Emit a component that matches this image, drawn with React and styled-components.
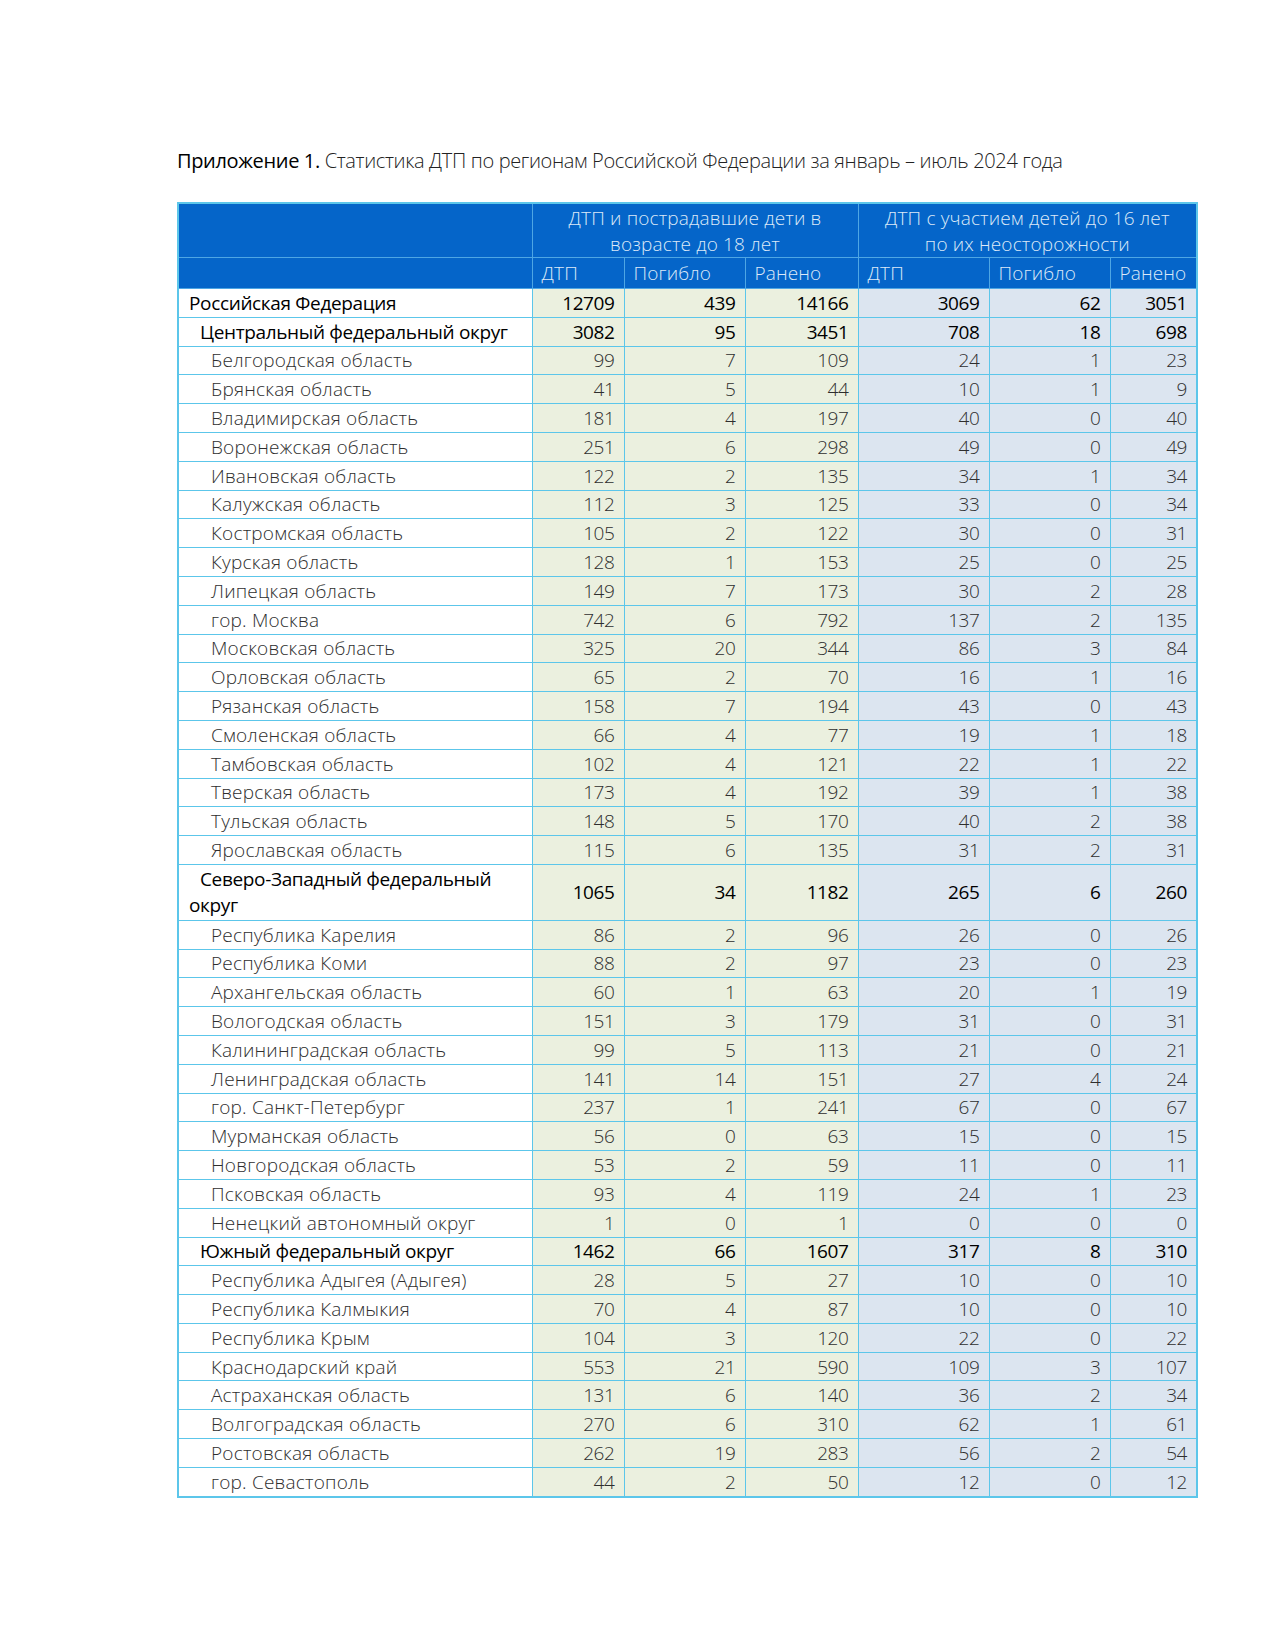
import React from "react";
import styled, { createGlobalStyle } from "styled-components";

const GlobalStyle = createGlobalStyle`
  body {
    margin: 0;
    background: #ffffff;
    font-family: "Open Sans", "Noto Sans", sans-serif;
  }
`;

const Page = styled.div`
  width: 1275px;
  min-height: 1650px;
  box-sizing: border-box;
  padding: 148px 0 0 177px;
`;

const Caption = styled.p`
  margin: 0 0 28px 0;
  font-size: 20px;
  line-height: 26px;
  font-weight: 300;
  letter-spacing: -0.35px;
  color: #222;

  b {
    font-weight: 400;
    color: #000;
  }
`;

const Table = styled.table`
  width: 1019px;
  border-collapse: collapse;
  table-layout: fixed;
  border: 2px solid #5cc6ea;
  font-size: 19px;
  letter-spacing: -0.4px;
`;

const HeadCell = styled.th`
  background: #0565c9;
  color: #dce9f8;
  font-weight: 300;
  letter-spacing: 0.15px;
  text-align: ${(p) => p.align || "left"};
  padding: 0 ${(p) => (p.align === "center" ? "4px" : "9px")};
  height: ${(p) => p.h}px;
  line-height: 26px;
  border: 1px solid #4ea6e4;
  border-top: ${(p) => (p.top ? "2px solid #5cc6ea" : "1px solid #4ea6e4")};
  vertical-align: middle;
`;

const NameCell = styled.td`
  background: #ffffff;
  color: ${(p) => (p.level < 2 ? "#000" : "#2e2e2e")};
  font-weight: ${(p) => (p.level < 2 ? 400 : 300)};
  letter-spacing: ${(p) => (p.level < 2 ? "-0.35px" : "0.2px")};
  padding: 0 8px 0 10px;
  text-indent: ${(p) => p.level * 11}px;
  height: ${(p) => p.h}px;
  line-height: 26px;
  border: 1px solid #5cc6ea;
  white-space: nowrap;
`;

const NumCell = styled.td`
  background: ${(p) => (p.group === 1 ? "#ebf0df" : "#dce5f0")};
  color: ${(p) => (p.bold ? "#000" : "#2e2e2e")};
  font-weight: ${(p) => (p.bold ? 400 : 300)};
  text-align: right;
  padding: 0 9px 0 4px;
  height: ${(p) => p.h}px;
  border: 1px solid #5cc6ea;
`;

const rows = [
  ["Российская Федерация", 0, 12709, 439, 14166, 3069, 62, 3051],
  ["Центральный федеральный округ", 1, 3082, 95, 3451, 708, 18, 698],
  ["Белгородская область", 2, 99, 7, 109, 24, 1, 23],
  ["Брянская область", 2, 41, 5, 44, 10, 1, 9],
  ["Владимирская область", 2, 181, 4, 197, 40, 0, 40],
  ["Воронежская область", 2, 251, 6, 298, 49, 0, 49],
  ["Ивановская область", 2, 122, 2, 135, 34, 1, 34],
  ["Калужская область", 2, 112, 3, 125, 33, 0, 34],
  ["Костромская область", 2, 105, 2, 122, 30, 0, 31],
  ["Курская область", 2, 128, 1, 153, 25, 0, 25],
  ["Липецкая область", 2, 149, 7, 173, 30, 2, 28],
  ["гор. Москва", 2, 742, 6, 792, 137, 2, 135],
  ["Московская область", 2, 325, 20, 344, 86, 3, 84],
  ["Орловская область", 2, 65, 2, 70, 16, 1, 16],
  ["Рязанская область", 2, 158, 7, 194, 43, 0, 43],
  ["Смоленская область", 2, 66, 4, 77, 19, 1, 18],
  ["Тамбовская область", 2, 102, 4, 121, 22, 1, 22],
  ["Тверская область", 2, 173, 4, 192, 39, 1, 38],
  ["Тульская область", 2, 148, 5, 170, 40, 2, 38],
  ["Ярославская область", 2, 115, 6, 135, 31, 2, 31],
  ["Северо-Западный федеральный|округ", 1, 1065, 34, 1182, 265, 6, 260],
  ["Республика Карелия", 2, 86, 2, 96, 26, 0, 26],
  ["Республика Коми", 2, 88, 2, 97, 23, 0, 23],
  ["Архангельская область", 2, 60, 1, 63, 20, 1, 19],
  ["Вологодская область", 2, 151, 3, 179, 31, 0, 31],
  ["Калининградская область", 2, 99, 5, 113, 21, 0, 21],
  ["Ленинградская область", 2, 141, 14, 151, 27, 4, 24],
  ["гор. Санкт-Петербург", 2, 237, 1, 241, 67, 0, 67],
  ["Мурманская область", 2, 56, 0, 63, 15, 0, 15],
  ["Новгородская область", 2, 53, 2, 59, 11, 0, 11],
  ["Псковская область", 2, 93, 4, 119, 24, 1, 23],
  ["Ненецкий автономный округ", 2, 1, 0, 1, 0, 0, 0],
  ["Южный федеральный округ", 1, 1462, 66, 1607, 317, 8, 310],
  ["Республика Адыгея (Адыгея)", 2, 28, 5, 27, 10, 0, 10],
  ["Республика Калмыкия", 2, 70, 4, 87, 10, 0, 10],
  ["Республика Крым", 2, 104, 3, 120, 22, 0, 22],
  ["Краснодарский край", 2, 553, 21, 590, 109, 3, 107],
  ["Астраханская область", 2, 131, 6, 140, 36, 2, 34],
  ["Волгоградская область", 2, 270, 6, 310, 62, 1, 61],
  ["Ростовская область", 2, 262, 19, 283, 56, 2, 54],
  ["гор. Севастополь", 2, 44, 2, 50, 12, 0, 12],
];

const colWidths = [354, 92, 121, 113, 131, 121, 87];
const subHeads = ["ДТП", "Погибло", "Ранено", "ДТП", "Погибло", "Ранено"];

const renderName = (name) => {
  const parts = name.split("|");
  if (parts.length === 1) return name;
  return (
    <>
      {parts[0]}
      <br />
      {parts[1]}
    </>
  );
};

export default function App() {
  return (
    <Page>
      <GlobalStyle />
      <Caption>
        <b>Приложение 1.</b> Статистика ДТП по регионам Российской Федерации за
        январь – июль 2024 года
      </Caption>
      <Table>
        <colgroup>
          {colWidths.map((w, i) => (
            <col key={i} style={{ width: w }} />
          ))}
        </colgroup>
        <thead>
          <tr>
            <HeadCell h={53} top />
            <HeadCell h={53} top colSpan={3} align="center">
              ДТП и пострадавшие дети в
              <br />
              возрасте до 18 лет
            </HeadCell>
            <HeadCell h={53} top colSpan={3} align="center">
              ДТП с участием детей до 16 лет
              <br />
              по их неосторожности
            </HeadCell>
          </tr>
          <tr>
            <HeadCell h={30} />
            {subHeads.map((t, i) => (
              <HeadCell key={i} h={30}>
                {t}
              </HeadCell>
            ))}
          </tr>
        </thead>
        <tbody>
          {rows.map(([name, level, ...nums]) => {
            const tall = name.includes("|");
            const h = tall ? 54.8 : 27.8;
            const bold = level < 2;
            return (
              <tr key={name}>
                <NameCell level={level} h={h}>
                  {renderName(name)}
                </NameCell>
                {nums.map((n, i) => (
                  <NumCell key={i} h={h} group={i < 3 ? 1 : 2} bold={bold}>
                    {n}
                  </NumCell>
                ))}
              </tr>
            );
          })}
        </tbody>
      </Table>
    </Page>
  );
}
